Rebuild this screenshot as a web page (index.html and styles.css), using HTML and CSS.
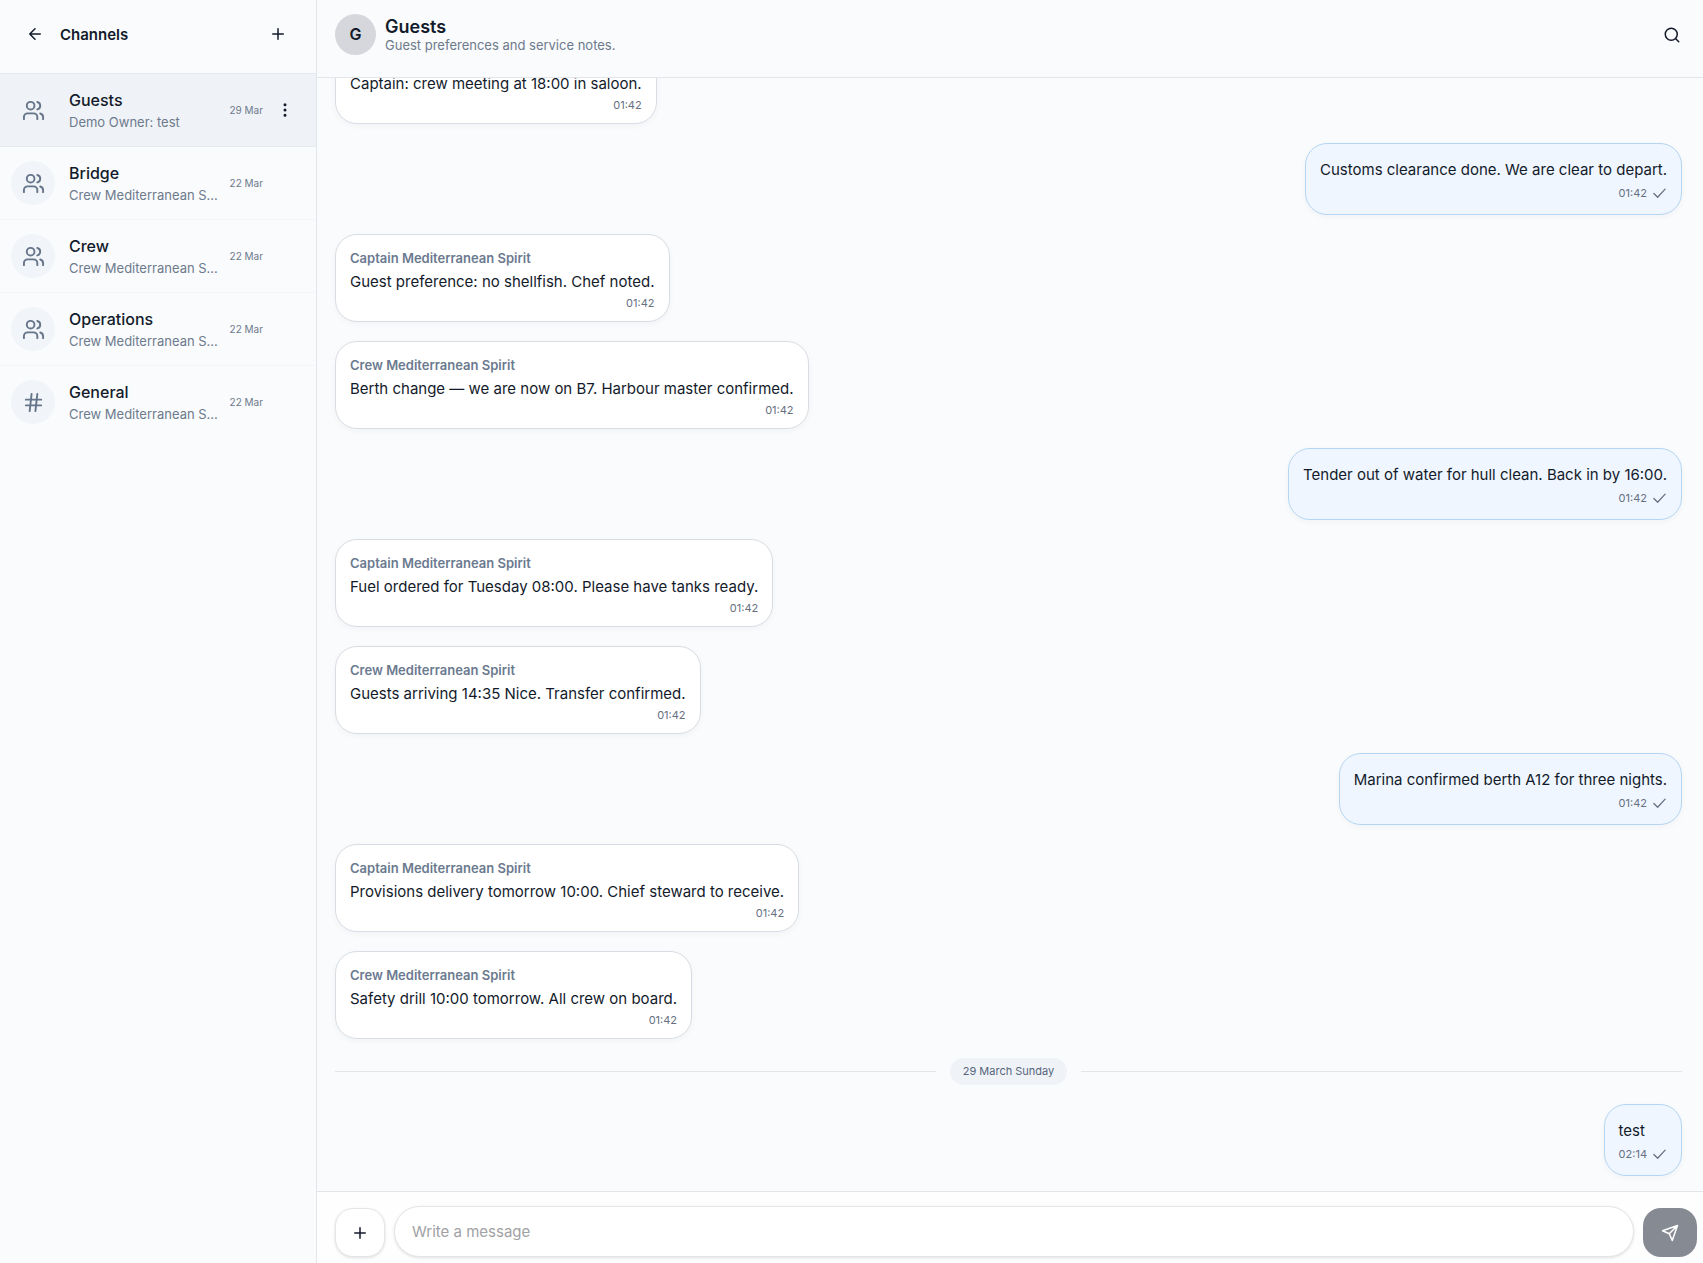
FILE: index.html
```html
<!DOCTYPE html>
<html lang="en">
<head>
    <meta charset="UTF-8">
    <meta name="viewport" content="width=device-width, initial-scale=1.0">
    <title>Channels - Guests</title>
    <link rel="stylesheet" href="styles.css">
</head>
<body>
    <!-- shared icons -->
    <svg class="sprite" aria-hidden="true">
        <symbol id="group" viewBox="0 0 24 24">
            <path d="M16 21v-2a4 4 0 0 0-4-4H6a4 4 0 0 0-4 4v2"/><circle cx="9" cy="7" r="4"/><path d="M22 21v-2a4 4 0 0 0-3-3.87"/><path d="M16 3.13a4 4 0 0 1 0 7.75"/>
        </symbol>
        <symbol id="hash" viewBox="0 0 24 24">
            <path d="M4 9h16M4 15h16M10 3 8 21M16 3l-2 18"/>
        </symbol>
        <symbol id="plus" viewBox="0 0 24 24"><path d="M5 12h14M12 5v14"/></symbol>
        <symbol id="tick" viewBox="0 0 24 24"><path d="M21 5 9 18l-6-6"/></symbol>
    </svg>

    <div class="app">
        <aside class="sidebar">
            <header class="sidebar-header">
                <button class="icon-btn" aria-label="Back"><svg class="icon" viewBox="0 0 24 24"><path d="m12 19-7-7 7-7M19 12H5"/></svg></button>
                <h1>Channels</h1>
                <button class="icon-btn" aria-label="Add channel"><svg class="icon"><use href="#plus"/></svg></button>
            </header>
            <nav class="channels">
                <div class="channel active">
                    <a href="#guests">
                        <span class="channel-icon"><svg class="icon"><use href="#group"/></svg></span>
                        <span class="channel-text"><span class="channel-name">Guests</span><span class="channel-last">Demo Owner: test</span></span>
                        <span class="channel-date">29 Mar</span>
                    </a>
                    <button class="more" aria-label="Channel options"><svg class="icon dots" viewBox="0 0 24 24"><circle cx="12" cy="12" r="1"/><circle cx="12" cy="5" r="1"/><circle cx="12" cy="19" r="1"/></svg></button>
                </div>
                <div class="channel">
                    <a href="#bridge">
                        <span class="channel-icon"><svg class="icon"><use href="#group"/></svg></span>
                        <span class="channel-text"><span class="channel-name">Bridge</span><span class="channel-last">Crew Mediterranean S...</span></span>
                        <span class="channel-date">22 Mar</span>
                    </a>
                </div>
                <div class="channel">
                    <a href="#crew">
                        <span class="channel-icon"><svg class="icon"><use href="#group"/></svg></span>
                        <span class="channel-text"><span class="channel-name">Crew</span><span class="channel-last">Crew Mediterranean S...</span></span>
                        <span class="channel-date">22 Mar</span>
                    </a>
                </div>
                <div class="channel">
                    <a href="#operations">
                        <span class="channel-icon"><svg class="icon"><use href="#group"/></svg></span>
                        <span class="channel-text"><span class="channel-name">Operations</span><span class="channel-last">Crew Mediterranean S...</span></span>
                        <span class="channel-date">22 Mar</span>
                    </a>
                </div>
                <div class="channel">
                    <a href="#general">
                        <span class="channel-icon"><svg class="icon"><use href="#hash"/></svg></span>
                        <span class="channel-text"><span class="channel-name">General</span><span class="channel-last">Crew Mediterranean S...</span></span>
                        <span class="channel-date">22 Mar</span>
                    </a>
                </div>
            </nav>
        </aside>

        <main class="chat">
            <header class="chat-header">
                <span class="avatar">G</span>
                <div class="chat-title">
                    <h2>Guests</h2>
                    <p>Guest preferences and service notes.</p>
                </div>
                <button class="icon-btn" aria-label="Search"><svg class="icon" viewBox="0 0 24 24"><circle cx="11" cy="11" r="8"/><path d="m21 21-4-4"/></svg></button>
            </header>

            <div class="messages">
                <div class="message">
                    <strong>Captain Mediterranean Spirit</strong>
                    <p>Captain: crew meeting at 18:00 in saloon.</p>
                    <span class="meta">01:42</span>
                </div>
                <div class="message own">
                    <p>Customs clearance done. We are clear to depart.</p>
                    <span class="meta">01:42 <svg class="icon tick"><use href="#tick"/></svg></span>
                </div>
                <div class="message">
                    <strong>Captain Mediterranean Spirit</strong>
                    <p>Guest preference: no shellfish. Chef noted.</p>
                    <span class="meta">01:42</span>
                </div>
                <div class="message">
                    <strong>Crew Mediterranean Spirit</strong>
                    <p>Berth change — we are now on B7. Harbour master confirmed.</p>
                    <span class="meta">01:42</span>
                </div>
                <div class="message own">
                    <p>Tender out of water for hull clean. Back in by 16:00.</p>
                    <span class="meta">01:42 <svg class="icon tick"><use href="#tick"/></svg></span>
                </div>
                <div class="message">
                    <strong>Captain Mediterranean Spirit</strong>
                    <p>Fuel ordered for Tuesday 08:00. Please have tanks ready.</p>
                    <span class="meta">01:42</span>
                </div>
                <div class="message">
                    <strong>Crew Mediterranean Spirit</strong>
                    <p>Guests arriving 14:35 Nice. Transfer confirmed.</p>
                    <span class="meta">01:42</span>
                </div>
                <div class="message own">
                    <p>Marina confirmed berth A12 for three nights.</p>
                    <span class="meta">01:42 <svg class="icon tick"><use href="#tick"/></svg></span>
                </div>
                <div class="message">
                    <strong>Captain Mediterranean Spirit</strong>
                    <p>Provisions delivery tomorrow 10:00. Chief steward to receive.</p>
                    <span class="meta">01:42</span>
                </div>
                <div class="message">
                    <strong>Crew Mediterranean Spirit</strong>
                    <p>Safety drill 10:00 tomorrow. All crew on board.</p>
                    <span class="meta">01:42</span>
                </div>
                <div class="day"><span>29 March Sunday</span></div>
                <div class="message own">
                    <p>test</p>
                    <span class="meta">02:14 <svg class="icon tick"><use href="#tick"/></svg></span>
                </div>
            </div>

            <form class="composer">
                <button type="button" class="attach" aria-label="Add attachment"><svg class="icon"><use href="#plus"/></svg></button>
                <input type="text" placeholder="Write a message" aria-label="Write a message">
                <button type="submit" class="send" aria-label="Send"><svg class="icon" viewBox="0 0 24 24"><path d="m22 2-7 20-4-9-9-4ZM22 2 11 13"/></svg></button>
            </form>
        </main>
    </div>
</body>
</html>
```
FILE: styles.css
```css
* {
    box-sizing: border-box;
}
body {
    margin: 0;
    font-family: Inter, "Liberation Sans", sans-serif;
    font-size: 15px;
    line-height: 24px;
    color: #131b2b;
    background: #fafbfd;
}
h1, h2, p {
    margin: 0;
}
button {
    padding: 0;
    border: 0;
    background: none;
    color: inherit;
    display: flex;
    align-items: center;
    justify-content: center;
}
a {
    color: inherit;
    text-decoration: none;
}
.sprite {
    display: none;
}
.icon {
    width: 18px;
    height: 18px;
    fill: none;
    stroke: currentColor;
    stroke-width: 2;
    stroke-linecap: round;
    stroke-linejoin: round;
}
.app {
    display: flex;
    height: 100vh;
}

/* sidebar */
.sidebar {
    width: 317px;
    flex-shrink: 0;
    border-right: 1px solid #e2e5ea;
}
.sidebar-header {
    display: flex;
    align-items: center;
    height: 74px;
    padding: 0 19px 5px 16px;
    border-bottom: 1px solid #e6e9ed;
}
.sidebar-header h1 {
    flex: 1;
    margin-left: 6px;
    padding-top: 2px;
    font-size: 15px;
    font-weight: 600;
}
.icon-btn {
    width: 38px;
    height: 38px;
}
.channel {
    display: flex;
    align-items: center;
    height: 73px;
    border-bottom: 1px solid #f4f5f8;
}
.channel:last-child {
    border-bottom-color: transparent;
}
.channel.active {
    background: #eff2f7;
    border-bottom-color: #e6e9ed;
}
.channel a {
    display: flex;
    align-items: center;
    width: 263px;
    padding-left: 11px;
}
.channel-icon {
    display: flex;
    align-items: center;
    justify-content: center;
    width: 44px;
    height: 44px;
    border-radius: 50%;
    background: #f1f4f9;
    color: #66758a;
}
.active .channel-icon {
    background: none;
}
.channel-icon .icon {
    width: 23px;
    height: 23px;
}
.channel-text {
    flex: 1;
    min-width: 0;
    margin-left: 14px;
    padding-top: 2px;
}
.channel-name, .channel-last {
    display: block;
    white-space: nowrap;
    line-height: 22px;
}
.channel-name {
    font-size: 16px;
    font-weight: 500;
}
.channel-last {
    font-size: 13px;
    color: #6d7a8c;
}
.channel-date {
    font-size: 10px;
    color: #6d7a8c;
}
.more {
    width: 32px;
    height: 32px;
    margin-left: 6px;
}
.dots {
    fill: currentColor;
}

/* chat */
.chat {
    flex: 1;
    min-width: 0;
    display: flex;
    flex-direction: column;
}
.chat-header {
    display: flex;
    align-items: center;
    height: 78px;
    flex-shrink: 0;
    padding: 0 12px 8px 18px;
    border-bottom: 1px solid #e2e5ea;
}
.avatar {
    width: 41px;
    height: 41px;
    border-radius: 50%;
    background: #d5d7dc;
    font-size: 16px;
    font-weight: 600;
    line-height: 41px;
    text-align: center;
}
.chat-title {
    flex: 1;
    margin-left: 9px;
}
.chat-title h2 {
    font-size: 18px;
    font-weight: 600;
    line-height: 20px;
}
.chat-title p {
    font-size: 13px;
    line-height: 16px;
    color: #6d7a8c;
}
.messages {
    flex: 1;
    min-height: 0;
    display: flex;
    flex-direction: column;
    justify-content: flex-end;
    align-items: flex-start;
    gap: 19px;
    padding: 0 21px 15px 18px;
    overflow: hidden;
}
.message {
    flex-shrink: 0;
    padding: 13px 14px 8px;
    border: 1px solid #d9dde3;
    border-radius: 22px;
    background: #fff;
    box-shadow: 0 2px 6px rgba(20, 30, 50, 0.04);
}
.message strong {
    display: block;
    margin-bottom: 2px;
    font-size: 13px;
    font-weight: 600;
    line-height: 20px;
    color: #6b7a8f;
}
.meta {
    display: flex;
    align-items: center;
    justify-content: flex-end;
    gap: 5px;
    font-size: 11px;
    line-height: 19px;
    color: #66707f;
}
.message.own {
    align-self: flex-end;
    padding-top: 14px;
    padding-bottom: 9px;
    background: #eff6ff;
    border-color: #b5d6f2;
}
.own .meta {
    line-height: 23px;
}
.tick {
    width: 15px;
    height: 15px;
}
.day {
    align-self: stretch;
    flex-shrink: 0;
    display: flex;
    align-items: center;
    gap: 14px;
    font-size: 11px;
    color: #56657a;
}
.day::before, .day::after {
    content: "";
    flex: 1;
    height: 1px;
    background: #e2e5ea;
}
.day span {
    padding: 0 13px;
    line-height: 27px;
    border-radius: 14px;
    background: #eff3f8;
}

/* composer */
.composer {
    display: flex;
    align-items: flex-end;
    gap: 9px;
    flex-shrink: 0;
    padding: 14px 6px 6px 18px;
    border-top: 1px solid #e2e5ea;
    background: #fefefe;
}
.attach, .composer input {
    border: 1px solid #e3e5e8;
    background: #fff;
    box-shadow: 0 1px 3px rgba(0, 0, 0, 0.12);
}
.attach {
    width: 50px;
    height: 49px;
    border-radius: 18px;
}
.composer input {
    flex: 1;
    min-width: 0;
    height: 51px;
    padding: 0 17px;
    border-radius: 26px;
    font: inherit;
    outline: none;
}
.composer input::placeholder {
    color: #a0a1a4;
}
.send {
    width: 54px;
    height: 49px;
    border-radius: 18px;
    background: #868a93;
    color: #fff;
}
```
